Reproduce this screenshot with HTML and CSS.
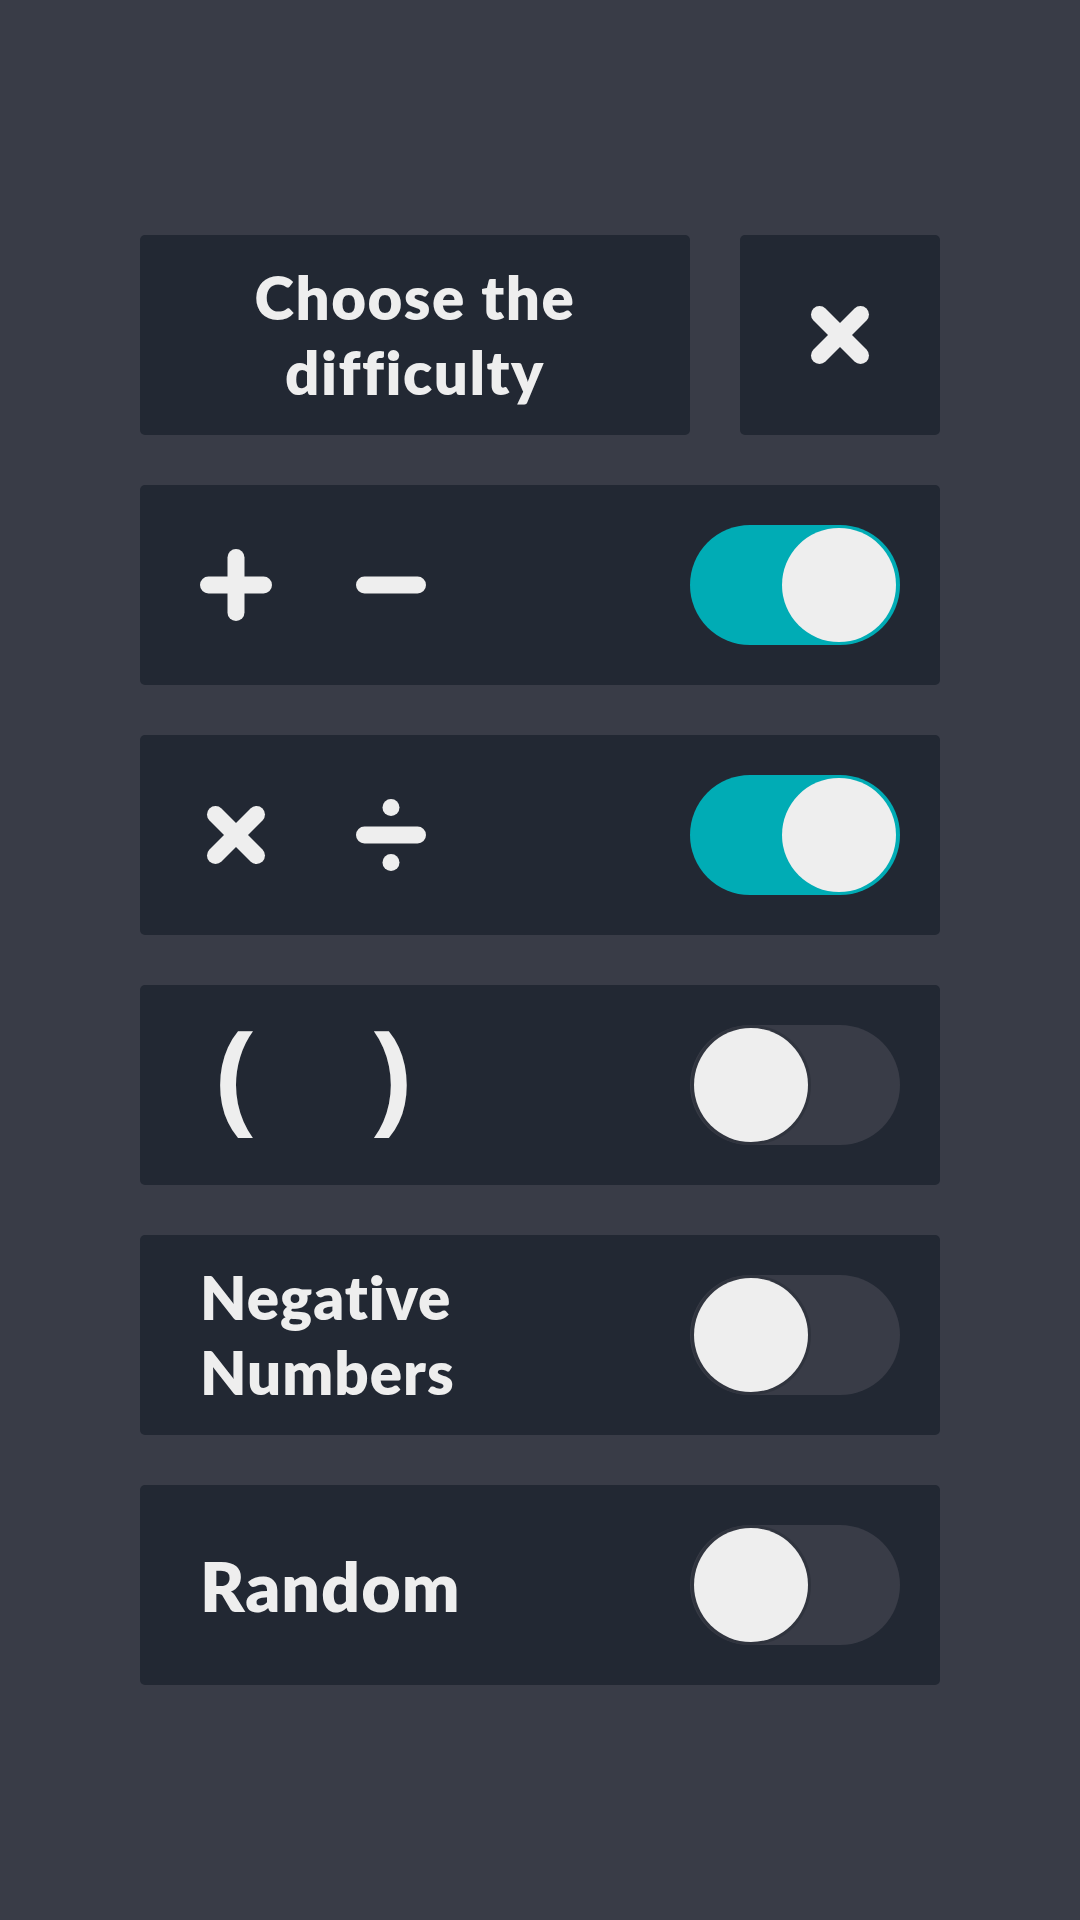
FILE: index.html
```html
<!DOCTYPE html>
<html lang="en">

<head>
    <meta charset="UTF-8">
    <meta name="viewport" content="width=device-width, initial-scale=1.0">
    <title>Choose the difficulty</title>
    <link rel="stylesheet" href="styles.css">
</head>

<body>
    <main class="panel">
        <div class="header-row">
            <div class="card title-card">
                <h1>Choose the<br>difficulty</h1>
            </div>
            <button class="card close-card" aria-label="Close">
                <svg class="icon" viewBox="0 0 72 72">
                    <line x1="15.5" y1="15.5" x2="56.5" y2="56.5" />
                    <line x1="56.5" y1="15.5" x2="15.5" y2="56.5" />
                </svg>
            </button>
        </div>

        <div class="card option">
            <div class="symbols">
                <svg class="icon" viewBox="0 0 72 72">
                    <line x1="36" y1="8.5" x2="36" y2="63.5" />
                    <line x1="8.5" y1="36" x2="63.5" y2="36" />
                </svg>
                <svg class="icon" viewBox="0 0 72 72">
                    <line x1="9.5" y1="36" x2="62.5" y2="36" />
                </svg>
            </div>
            <label class="switch on"><span class="knob"></span></label>
        </div>

        <div class="card option">
            <div class="symbols">
                <svg class="icon" viewBox="0 0 72 72">
                    <line x1="15.5" y1="15.5" x2="56.5" y2="56.5" />
                    <line x1="56.5" y1="15.5" x2="15.5" y2="56.5" />
                </svg>
                <svg class="icon" viewBox="0 0 72 72">
                    <line x1="9.5" y1="36" x2="62.5" y2="36" />
                    <circle cx="36" cy="8.5" r="8.5" />
                    <circle cx="36" cy="63.5" r="8.5" />
                </svg>
            </div>
            <label class="switch on"><span class="knob"></span></label>
        </div>

        <div class="card option">
            <div class="symbols">
                <span class="paren">(</span>
                <span class="paren">)</span>
            </div>
            <label class="switch"><span class="knob"></span></label>
        </div>

        <div class="card option">
            <span class="option-label">Negative<br>Numbers</span>
            <label class="switch"><span class="knob"></span></label>
        </div>

        <div class="card option">
            <span class="option-label big">Random</span>
            <label class="switch"><span class="knob"></span></label>
        </div>
    </main>
</body>

</html>
```

FILE: styles.css
```css
/* --- base --- */
:root {
    --bg-color: #393c47;
    --card-bg: #222833;
    --accent: #00acb5;
    --light: #eeeeee;
    --font-family: 'Lato', 'Open Sans', sans-serif;
}

body {
    margin: 0;
    background-color: var(--bg-color);
    color: var(--light);
    font-family: var(--font-family);
    min-height: 1920px;
}

.panel {
    width: 800px;
    margin: 0 auto;
    padding-top: 235px;
    display: flex;
    flex-direction: column;
    gap: 50px;
}

.card {
    background: var(--card-bg);
    border-radius: 5px;
    height: 200px;
    box-sizing: border-box;
}

/* --- header --- */
.header-row {
    display: flex;
    gap: 50px;
}

.title-card {
    flex: 1;
    display: flex;
    align-items: center;
    justify-content: center;
}

.title-card h1 {
    margin: 0;
    font-size: 60px;
    line-height: 75px;
    font-weight: 800;
    text-align: center;
    letter-spacing: 1.5px;
}

.close-card {
    width: 200px;
    border: none;
    padding: 0;
    display: flex;
    align-items: center;
    justify-content: center;
    cursor: pointer;
}

/* --- icons --- */
.icon {
    width: 72px;
    height: 72px;
    display: block;
    stroke: var(--light);
    stroke-width: 17;
    stroke-linecap: round;
    fill: var(--light);
}

.icon circle {
    stroke: none;
}

/* --- options --- */
.option {
    display: flex;
    align-items: center;
    justify-content: space-between;
    padding: 0 40px 0 60px;
}

.symbols {
    display: flex;
    align-items: center;
    gap: 83px;
}

.paren {
    width: 72px;
    text-align: center;
    font-family: 'Open Sans', sans-serif;
    font-size: 122px;
    line-height: 140px;
    font-weight: 700;
    padding-bottom: 27px;
}

.option-label {
    font-size: 60px;
    line-height: 75px;
    font-weight: 800;
    letter-spacing: 1px;
}

.option-label.big {
    font-size: 68px;
}

/* --- switch --- */
.switch {
    width: 210px;
    height: 120px;
    border-radius: 60px;
    background: var(--bg-color);
    display: flex;
    align-items: center;
    padding: 0 4px;
    box-sizing: border-box;
    cursor: pointer;
}

.knob {
    width: 114px;
    height: 114px;
    border-radius: 50%;
    background: var(--light);
    box-shadow: 0 0 0 3px #30343e;
}

.switch.on {
    background: var(--accent);
    justify-content: flex-end;
}

.switch.on .knob {
    box-shadow: none;
}
```
